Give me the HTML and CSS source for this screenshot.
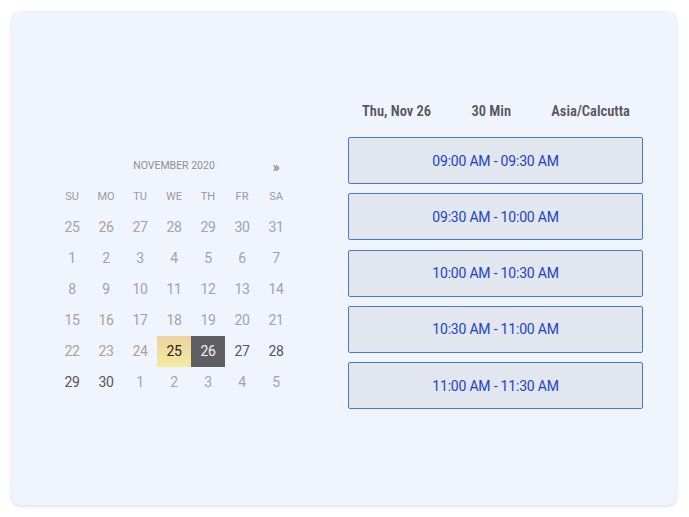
FILE: index.html
```html
<!DOCTYPE html>
<html>
<head>
<meta charset="utf-8">
<link rel="stylesheet" href="styles.css">
</head>
<body>
<div class="card">
  <div class="calendar">
    <div class="cal-head">
      <span class="nav"></span>
      <span class="month">NOVEMBER 2020</span>
      <span class="nav">»</span>
    </div>
    <div class="grid">
      <span class="wd">SU</span><span class="wd">MO</span><span class="wd">TU</span><span class="wd">WE</span><span class="wd">TH</span><span class="wd">FR</span><span class="wd">SA</span>
      <span class="d">25</span><span class="d">26</span><span class="d">27</span><span class="d">28</span><span class="d">29</span><span class="d">30</span><span class="d">31</span>
      <span class="d">1</span><span class="d">2</span><span class="d">3</span><span class="d">4</span><span class="d">5</span><span class="d">6</span><span class="d">7</span>
      <span class="d">8</span><span class="d">9</span><span class="d">10</span><span class="d">11</span><span class="d">12</span><span class="d">13</span><span class="d">14</span>
      <span class="d">15</span><span class="d">16</span><span class="d">17</span><span class="d">18</span><span class="d">19</span><span class="d">20</span><span class="d">21</span>
      <span class="d">22</span><span class="d">23</span><span class="d">24</span><span class="d today">25</span><span class="d selected">26</span><span class="d active">27</span><span class="d active">28</span>
      <span class="d active">29</span><span class="d active">30</span><span class="d">1</span><span class="d">2</span><span class="d">3</span><span class="d">4</span><span class="d">5</span>
    </div>
  </div>
  <div class="slots">
    <div class="slot-head">
      <span>Thu, Nov 26</span>
      <span>30 Min</span>
      <span>Asia/Calcutta</span>
    </div>
    <button class="slot">09:00 AM - 09:30 AM</button>
    <button class="slot">09:30 AM - 10:00 AM</button>
    <button class="slot">10:00 AM - 10:30 AM</button>
    <button class="slot">10:30 AM - 11:00 AM</button>
    <button class="slot">11:00 AM - 11:30 AM</button>
  </div>
</div>
</body>
</html>
```

FILE: styles.css
```css
html, body {
  margin: 0;
  padding: 0;
  background: #ffffff;
  font-family: Roboto, "Liberation Sans", sans-serif;
}

.card {
  box-sizing: border-box;
  margin: 12px 13px 12px 12px;
  height: 493px;
  background: #f0f4fc;
  border-radius: 8px;
  box-shadow: 0 1px 4px rgba(0, 0, 0, 0.16);
  display: flex;
  align-items: flex-start;
  padding-left: 43px;
}

.calendar {
  width: 238px;
  margin-top: 137.5px;
}

.cal-head,
.grid {
  display: grid;
  grid-template-columns: repeat(7, 34px);
  grid-auto-rows: 31px;
}

.cal-head {
  height: 31px;
  align-items: center;
  color: #8f8f94;
}

.month {
  grid-column: 2 / 7;
  text-align: center;
  font-size: 10.5px;
}

.nav {
  text-align: center;
  font-size: 15px;
  color: #707075;
  padding-top: 3px;
}

.grid span {
  display: flex;
  align-items: center;
  justify-content: center;
}

.wd {
  font-size: 11px;
  color: #9a9aa0;
}

.d {
  font-size: 14px;
  color: #a3a3a8;
  letter-spacing: -0.3px;
}

.d.active {
  color: #55565b;
}

.d.today {
  background: linear-gradient(#eed2a2, #f2ec9f);
  color: #222;
}

.d.selected {
  background: #5e5f63;
  color: #f2f2f2;
}

.slots {
  width: 295px;
  margin-left: 55px;
  margin-top: 89px;
  display: flex;
  flex-direction: column;
}

.slot-head {
  display: flex;
  justify-content: space-between;
  padding: 0 13px 0 14px;
  height: 20px;
  align-items: center;
  font-family: "Roboto Condensed", Roboto, "Liberation Sans", sans-serif;
  font-stretch: condensed;
  font-size: 14.5px;
  font-weight: 600;
  color: #56575c;
  margin-bottom: 16px;
}

.slot {
  box-sizing: border-box;
  height: 47px;
  margin: 0 0 9.25px 0;
  padding: 0;
  background: #e2e6ee;
  border: 1px solid #4677dc;
  border-radius: 2px;
  font-family: Roboto, "Liberation Sans", sans-serif;
  font-size: 14px;
  letter-spacing: -0.2px;
  color: #1b43c6;
  cursor: pointer;
}
```
